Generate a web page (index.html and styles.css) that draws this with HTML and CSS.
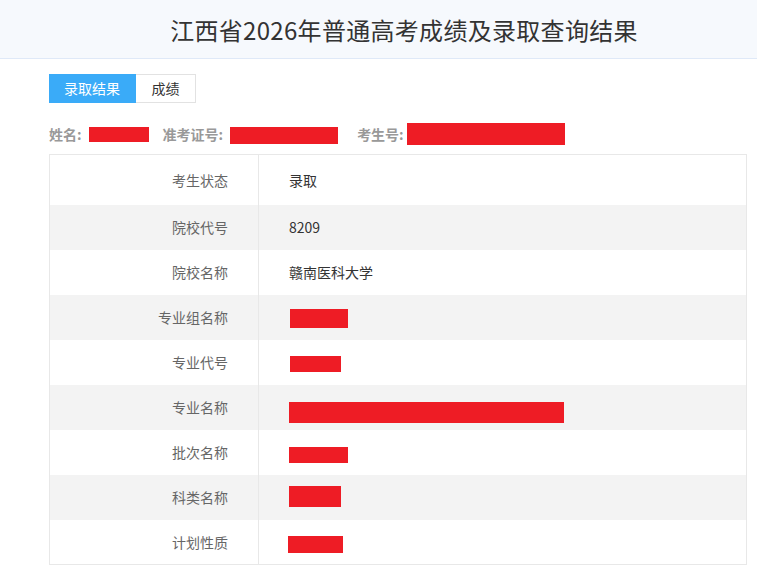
FILE: index.html
```html
<!DOCTYPE html>
<html lang="zh-CN">
<head>
    <meta charset="UTF-8">
    <title>江西省2026年普通高考成绩及录取查询结果</title>
    <link rel="stylesheet" href="styles.css">
</head>
<body>
    <header class="top-bar">
        <h1>江西省2026年普通高考成绩及录取查询结果</h1>
    </header>

    <main class="content">
        <div class="tabs">
            <span class="tab active">录取结果</span>
            <span class="tab">成绩</span>
        </div>

        <div class="student-info">
            <span class="field field-name">姓名:<i class="mask mask-name"></i></span>
            <span class="field field-ticket">准考证号:<i class="mask mask-ticket"></i></span>
            <span class="field">考生号:<i class="mask mask-id"></i></span>
        </div>

        <table class="result-table">
            <tbody>
                <tr class="first">
                    <th>考生状态</th>
                    <td>录取</td>
                </tr>
                <tr>
                    <th>院校代号</th>
                    <td>8209</td>
                </tr>
                <tr>
                    <th>院校名称</th>
                    <td>赣南医科大学</td>
                </tr>
                <tr>
                    <th>专业组名称</th>
                    <td><i class="mask mask-group"></i></td>
                </tr>
                <tr>
                    <th>专业代号</th>
                    <td><i class="mask mask-major-code"></i></td>
                </tr>
                <tr>
                    <th>专业名称</th>
                    <td><i class="mask mask-major"></i></td>
                </tr>
                <tr>
                    <th>批次名称</th>
                    <td><i class="mask mask-batch"></i></td>
                </tr>
                <tr>
                    <th>科类名称</th>
                    <td><i class="mask mask-type"></i></td>
                </tr>
                <tr>
                    <th>计划性质</th>
                    <td><i class="mask mask-plan"></i></td>
                </tr>
            </tbody>
        </table>
    </main>
</body>
</html>
```

FILE: styles.css
```css
body {
    margin: 0;
    padding: 0;
    background-color: #fff;
    font-family: "Noto Sans CJK SC", "Noto Sans", sans-serif;
    color: #333;
}

.top-bar {
    height: 58px;
    background-color: #f6f9fd;
    border-bottom: 1px solid #dfe9f8;
    display: flex;
    align-items: center;
    justify-content: center;
    padding-left: 51px;
}

.top-bar h1 {
    margin: 0;
    font-size: 24px;
    letter-spacing: 0.3px;
    font-weight: normal;
    color: #333;
}

.content {
    padding: 15px 10px 14px 49px;
}

/* tab switcher */
.tabs {
    display: flex;
    height: 29px;
}

.tab {
    box-sizing: border-box;
    width: 60px;
    height: 29px;
    line-height: 27px;
    text-align: center;
    font-size: 14px;
    color: #333;
    border: 1px solid #e2e2e2;
    border-left: none;
}

.tab.active {
    width: 87px;
    background-color: #3aabf8;
    border-color: #3aabf8;
    color: #fff;
}

.student-info {
    display: flex;
    align-items: center;
    height: 40px;
    margin-top: 11px;
    font-size: 14px;
    font-weight: bold;
    color: #999;
}

.field {
    display: flex;
    align-items: center;
}

.field-name {
    margin-right: 14px;
}

.field-ticket {
    margin-right: 19px;
}

/* redaction blocks */
.mask {
    display: inline-block;
    background-color: #ee1c25;
    vertical-align: middle;
}

.mask-name { width: 60px; height: 15px; margin-left: 7px; }
.mask-ticket { width: 108px; height: 17px; margin-left: 7px; margin-top: 2px; }
.mask-id { width: 158px; height: 22px; margin-left: 3px; }

.result-table {
    width: 698px;
    border-collapse: collapse;
    border: 1px solid #e8e8e8;
    font-size: 14px;
}

.result-table tr {
    height: 45px;
}

.result-table tr.first {
    height: 50px;
}

.result-table tr:nth-child(even) {
    background-color: #f3f3f3;
}

.result-table th {
    width: 178px;
    padding: 0 30px 0 0;
    text-align: right;
    font-weight: normal;
    color: #666;
    border-right: 1px solid #e8e8e8;
}

.result-table td {
    padding: 0 0 0 30px;
    color: #333;
}

.mask-group { width: 58px; height: 19px; margin-left: 1px; margin-top: 2px; }
.mask-major-code { width: 51px; height: 16px; margin-left: 1px; margin-top: 1px; }
.mask-major { width: 275px; height: 21px; margin-top: 10px; }
.mask-batch { width: 59px; height: 16px; margin-top: 3px; }
.mask-type { width: 52px; height: 21px; margin-bottom: 2px; }
.mask-plan { width: 55px; height: 17px; margin-left: -1px; margin-top: 4px; }
```
